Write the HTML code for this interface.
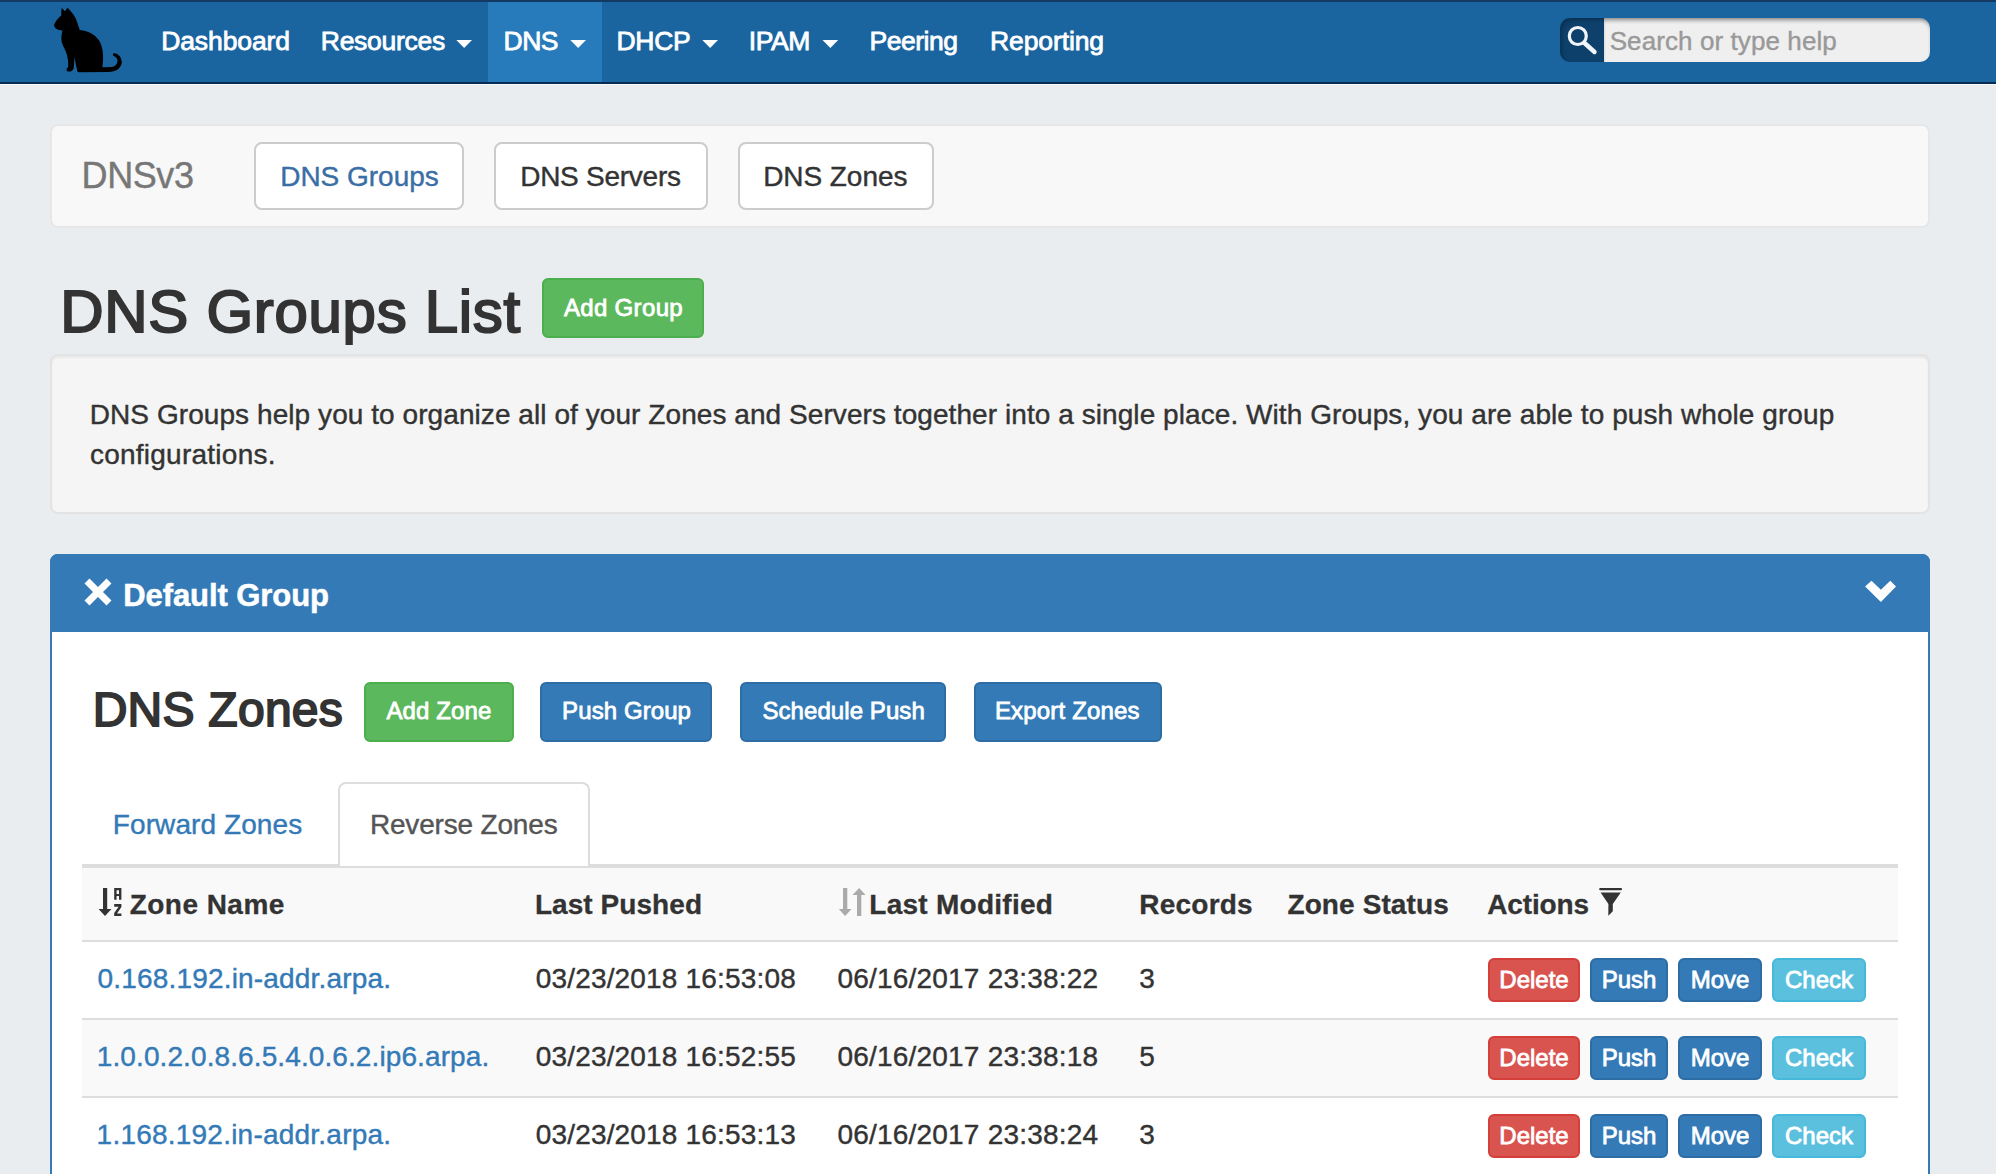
<!DOCTYPE html>
<html><head><meta charset="utf-8"><title>DNS Groups</title>
<style>
html,body{margin:0;padding:0}
body{width:1996px;height:1174px;overflow:hidden;position:relative;background:#eaedf0;font-family:"Liberation Sans",sans-serif}
.t{position:absolute;white-space:nowrap;line-height:1;font-family:"Liberation Sans",sans-serif}
</style></head><body>
<div style="position:absolute;left:0px;top:0px;width:1996px;height:84px;box-sizing:border-box;background:#1a65a0;border-top:2px solid #143a63;border-bottom:2px solid #062c54"></div>
<div style="position:absolute;left:0px;top:84px;width:1996px;height:1px;box-sizing:border-box;background:#f7f8fa"></div>
<div style="position:absolute;left:488px;top:2px;width:114px;height:80px;box-sizing:border-box;background:#287bba"></div>
<div style="position:absolute;left:1560px;top:18px;width:44px;height:44px;box-sizing:border-box;background:#0d406b;border-radius:10px 0 0 10px;box-shadow:inset 2px 2px 4px rgba(0,0,0,.25)"></div>
<div style="position:absolute;left:1604px;top:18px;width:326px;height:44px;box-sizing:border-box;background:#efefef;border-radius:0 10px 10px 0;box-shadow:inset 0 4px 4px -2px rgba(0,0,0,.45)"></div>
<div style="position:absolute;left:50px;top:124px;width:1880px;height:104px;box-sizing:border-box;background:#f8f8f8;border:2px solid #e7e7e7;border-radius:8px"></div>
<div style="position:absolute;left:254px;top:142px;width:210px;height:68px;box-sizing:border-box;background:#fff;border:2px solid #ccc;border-radius:8px"></div>
<div style="position:absolute;left:494px;top:142px;width:214px;height:68px;box-sizing:border-box;background:#fff;border:2px solid #ccc;border-radius:8px"></div>
<div style="position:absolute;left:738px;top:142px;width:196px;height:68px;box-sizing:border-box;background:#fff;border:2px solid #ccc;border-radius:8px"></div>
<div style="position:absolute;left:542px;top:278px;width:162px;height:60px;box-sizing:border-box;background:#5cb85c;border:2px solid #4cae4c;border-radius:6px"></div>
<div style="position:absolute;left:50px;top:354px;width:1880px;height:160px;box-sizing:border-box;background:#f5f5f5;border:2px solid #e3e3e3;border-radius:8px;box-shadow:inset 0 2px 2px rgba(0,0,0,.05)"></div>
<div style="position:absolute;left:50px;top:554px;width:1880px;height:746px;box-sizing:border-box;background:#fff;border:2px solid #337ab7;border-radius:8px"></div>
<div style="position:absolute;left:50px;top:554px;width:1880px;height:78px;box-sizing:border-box;background:#337ab7;border-radius:8px 8px 0 0"></div>
<div style="position:absolute;left:364px;top:682px;width:150px;height:60px;box-sizing:border-box;background:#5cb85c;border:2px solid #4cae4c;border-radius:6px"></div>
<div style="position:absolute;left:540px;top:682px;width:172px;height:60px;box-sizing:border-box;background:#337ab7;border:2px solid #2e6da4;border-radius:6px"></div>
<div style="position:absolute;left:740px;top:682px;width:206px;height:60px;box-sizing:border-box;background:#337ab7;border:2px solid #2e6da4;border-radius:6px"></div>
<div style="position:absolute;left:974px;top:682px;width:188px;height:60px;box-sizing:border-box;background:#337ab7;border:2px solid #2e6da4;border-radius:6px"></div>
<div style="position:absolute;left:82px;top:864px;width:1816px;height:2px;box-sizing:border-box;background:#ddd"></div>
<div style="position:absolute;left:338px;top:782px;width:252px;height:84px;box-sizing:border-box;background:#fff;border:2px solid #ddd;border-bottom:none;border-radius:8px 8px 0 0"></div>
<div style="position:absolute;left:82px;top:866px;width:1816px;height:2px;box-sizing:border-box;background:#ddd"></div>
<div style="position:absolute;left:82px;top:868px;width:1816px;height:72px;box-sizing:border-box;background:#f9f9f9"></div>
<div style="position:absolute;left:82px;top:940px;width:1816px;height:2px;box-sizing:border-box;background:#ddd"></div>
<div style="position:absolute;left:82px;top:1018px;width:1816px;height:2px;box-sizing:border-box;background:#ddd"></div>
<div style="position:absolute;left:82px;top:1020px;width:1816px;height:76px;box-sizing:border-box;background:#f9f9f9"></div>
<div style="position:absolute;left:82px;top:1096px;width:1816px;height:2px;box-sizing:border-box;background:#ddd"></div>
<div style="position:absolute;left:1488px;top:958px;width:92px;height:44px;box-sizing:border-box;background:#d9534f;border:2px solid #d43f3a;border-radius:6px"></div>
<div style="position:absolute;left:1590px;top:958px;width:78px;height:44px;box-sizing:border-box;background:#337ab7;border:2px solid #2e6da4;border-radius:6px"></div>
<div style="position:absolute;left:1678px;top:958px;width:84px;height:44px;box-sizing:border-box;background:#337ab7;border:2px solid #2e6da4;border-radius:6px"></div>
<div style="position:absolute;left:1772px;top:958px;width:94px;height:44px;box-sizing:border-box;background:#5bc0de;border:2px solid #46b8da;border-radius:6px"></div>
<div style="position:absolute;left:1488px;top:1036px;width:92px;height:44px;box-sizing:border-box;background:#d9534f;border:2px solid #d43f3a;border-radius:6px"></div>
<div style="position:absolute;left:1590px;top:1036px;width:78px;height:44px;box-sizing:border-box;background:#337ab7;border:2px solid #2e6da4;border-radius:6px"></div>
<div style="position:absolute;left:1678px;top:1036px;width:84px;height:44px;box-sizing:border-box;background:#337ab7;border:2px solid #2e6da4;border-radius:6px"></div>
<div style="position:absolute;left:1772px;top:1036px;width:94px;height:44px;box-sizing:border-box;background:#5bc0de;border:2px solid #46b8da;border-radius:6px"></div>
<div style="position:absolute;left:1488px;top:1114px;width:92px;height:44px;box-sizing:border-box;background:#d9534f;border:2px solid #d43f3a;border-radius:6px"></div>
<div style="position:absolute;left:1590px;top:1114px;width:78px;height:44px;box-sizing:border-box;background:#337ab7;border:2px solid #2e6da4;border-radius:6px"></div>
<div style="position:absolute;left:1678px;top:1114px;width:84px;height:44px;box-sizing:border-box;background:#337ab7;border:2px solid #2e6da4;border-radius:6px"></div>
<div style="position:absolute;left:1772px;top:1114px;width:94px;height:44px;box-sizing:border-box;background:#5bc0de;border:2px solid #46b8da;border-radius:6px"></div>

<svg style="position:absolute;left:0;top:0" width="1996" height="1174" viewBox="0 0 1996 1174">
 <!-- cat -->
 <g transform="translate(40,0) scale(0.085179)">
<path fill="#000" d="M255,90 L292,132 L322,92 C350,120 380,150 405,190 C430,230 445,290 468,352 C560,362 640,400 690,470 C730,530 745,620 740,700 C738,740 735,770 733,790 L840,788 C880,785 905,760 910,720 C912,690 895,670 870,660 C850,650 850,625 875,625 C925,630 960,680 960,730 C955,800 890,845 800,845 L460,848 C440,845 430,830 435,815 C420,770 415,720 408,670 C400,720 400,770 395,800 C385,835 355,845 325,838 C305,830 305,805 330,790 C335,760 330,700 315,640 C295,570 260,530 255,490 C245,440 255,390 265,362 C230,355 205,350 185,335 C160,315 160,290 180,262 C200,230 225,200 250,182 C248,150 250,120 255,90 Z"/>
 </g>
 <!-- carets -->
 <g fill="#fff">
  <path d="M456.3,40 L472,40 L464.15,48 Z"/>
  <path d="M570.3,40 L586,40 L578.15,48 Z"/>
  <path d="M702.3,40 L718,40 L710.15,48 Z"/>
  <path d="M822.5,40 L838.2,40 L830.35,48 Z"/>
 </g>
 <!-- magnifier -->
 <g stroke="#f2f5f8" fill="none" stroke-linecap="round">
  <circle cx="1577.8" cy="36" r="8.5" stroke-width="3.2"/>
  <path d="M1584.5,43 L1594.5,52" stroke-width="4.4"/>
 </g>
 <!-- X icon -->
 <g stroke="#fff" stroke-width="7">
  <path d="M87,581 L109,603 M109,581 L87,603"/>
 </g>
 <!-- chevron -->
 <path fill="#fff" d="M1865.1,586.5 L1871.5,580.8 L1880.9,589.7 L1890.3,580.8 L1896,586.5 L1880.9,602 Z"/>
 <!-- sort az icon -->
 <g fill="#333">
  <rect x="103" y="888" width="4.2" height="22"/>
  <path d="M98.6,909 L111.5,909 L105,916 Z"/>
  <path d="M114.2,888 h7.2 v11.8 h-2.4 v-3.9 h-2.4 v3.9 h-2.4 Z M116.6,890.2 v3.7 h2.4 v-3.7 Z" fill-rule="evenodd"/>
  <path d="M114.2,904.1 h7.2 v3 l-4.4,6.3 h4.4 v2.5 h-7.2 v-2.8 l4.4,-6.4 h-4.4 Z"/>
 </g>
 <!-- sort both icon gray -->
 <g fill="#aaa">
  <rect x="843" y="888" width="4.3" height="21.5"/>
  <path d="M838.8,909 L851.5,909 L845.15,916 Z"/>
  <rect x="857" y="894.5" width="4.3" height="21.5"/>
  <path d="M852.6,895 L865.6,895 L859.15,888 Z"/>
 </g>
 <!-- funnel -->
 <g fill="#333">
  <rect x="1599.2" y="888" width="22.8" height="2.2" rx="1"/>
  <path d="M1600.6,892.6 L1620.8,892.6 L1612.8,903.9 L1612.8,911.3 L1608.3,915.8 L1608.4,903.9 Z"/>
 </g>
</svg>

<div class="t" style="left:161.20px;top:28.0px;font-size:26.5px;color:#fff;letter-spacing:-0.100px;-webkit-text-stroke:0.80px #fff;">Dashboard</div>
<div class="t" style="left:320.80px;top:28.0px;font-size:26.5px;color:#fff;letter-spacing:-0.275px;-webkit-text-stroke:0.80px #fff;">Resources</div>
<div class="t" style="left:503.40px;top:28.0px;font-size:26.5px;color:#fff;letter-spacing:-0.400px;-webkit-text-stroke:0.80px #fff;">DNS</div>
<div class="t" style="left:616.60px;top:28.0px;font-size:26.5px;color:#fff;letter-spacing:-0.367px;-webkit-text-stroke:0.80px #fff;">DHCP</div>
<div class="t" style="left:748.80px;top:28.0px;font-size:26.5px;color:#fff;letter-spacing:-0.400px;-webkit-text-stroke:0.80px #fff;">IPAM</div>
<div class="t" style="left:869.50px;top:28.0px;font-size:26.5px;color:#fff;letter-spacing:-0.483px;-webkit-text-stroke:0.80px #fff;">Peering</div>
<div class="t" style="left:990.00px;top:28.0px;font-size:26.5px;color:#fff;letter-spacing:-0.100px;-webkit-text-stroke:0.80px #fff;">Reporting</div>
<div class="t" style="left:1609.70px;top:28.0px;font-size:26px;color:#999;letter-spacing:0.089px;-webkit-text-stroke:0.40px #999;">Search or type help</div>
<div class="t" style="left:81.60px;top:158.0px;font-size:36px;color:#777;letter-spacing:-0.425px;-webkit-text-stroke:0.40px #777;">DNSv3</div>
<div class="t" style="left:280.20px;top:162.8px;font-size:28px;color:#3a6ea5;letter-spacing:-0.011px;-webkit-text-stroke:0.40px #3a6ea5;">DNS Groups</div>
<div class="t" style="left:520.20px;top:162.8px;font-size:28px;color:#333;letter-spacing:-0.260px;-webkit-text-stroke:0.40px #333;">DNS Servers</div>
<div class="t" style="left:763.20px;top:162.8px;font-size:28px;color:#333;letter-spacing:-0.063px;-webkit-text-stroke:0.40px #333;">DNS Zones</div>
<div class="t" style="left:60.30px;top:282.0px;font-size:60px;color:#333;letter-spacing:0.693px;-webkit-text-stroke:2.00px #333;">DNS Groups List</div>
<div class="t" style="left:563.90px;top:296.0px;font-size:24px;color:#fff;letter-spacing:0.338px;-webkit-text-stroke:0.80px #fff;">Add Group</div>
<div class="t" style="left:89.80px;top:401.0px;font-size:28px;color:#333;letter-spacing:0.066px;-webkit-text-stroke:0.40px #333;">DNS Groups help you to organize all of your Zones and Servers together into a single place. With Groups, you are able to push whole group</div>
<div class="t" style="left:89.90px;top:441.0px;font-size:28px;color:#333;letter-spacing:0.250px;-webkit-text-stroke:0.40px #333;">configurations.</div>
<div class="t" style="left:123.15px;top:580.0px;font-size:31px;color:#fff;font-weight:bold;letter-spacing:-0.067px;-webkit-text-stroke:0.50px #fff;">Default Group</div>
<div class="t" style="left:92.65px;top:686.0px;font-size:48px;color:#333;letter-spacing:0.262px;-webkit-text-stroke:1.90px #333;">DNS Zones</div>
<div class="t" style="left:386.40px;top:699.0px;font-size:24px;color:#fff;letter-spacing:0.129px;-webkit-text-stroke:0.80px #fff;">Add Zone</div>
<div class="t" style="left:562.10px;top:699.0px;font-size:24px;color:#fff;letter-spacing:0.089px;-webkit-text-stroke:0.80px #fff;">Push Group</div>
<div class="t" style="left:762.40px;top:699.0px;font-size:24px;color:#fff;letter-spacing:0.075px;-webkit-text-stroke:0.80px #fff;">Schedule Push</div>
<div class="t" style="left:994.90px;top:699.0px;font-size:24px;color:#fff;letter-spacing:0.173px;-webkit-text-stroke:0.80px #fff;">Export Zones</div>
<div class="t" style="left:112.80px;top:811.4px;font-size:28px;color:#337ab7;letter-spacing:0.092px;-webkit-text-stroke:0.40px #337ab7;">Forward Zones</div>
<div class="t" style="left:369.90px;top:811.4px;font-size:28px;color:#555;letter-spacing:-0.175px;-webkit-text-stroke:0.40px #555;">Reverse Zones</div>
<div class="t" style="left:129.65px;top:891.0px;font-size:28px;color:#333;font-weight:bold;letter-spacing:0.475px;-webkit-text-stroke:0.30px #333;">Zone Name</div>
<div class="t" style="left:534.95px;top:891.0px;font-size:28px;color:#333;font-weight:bold;letter-spacing:0.060px;-webkit-text-stroke:0.30px #333;">Last Pushed</div>
<div class="t" style="left:869.35px;top:891.0px;font-size:28px;color:#333;font-weight:bold;letter-spacing:0.258px;-webkit-text-stroke:0.30px #333;">Last Modified</div>
<div class="t" style="left:1139.25px;top:891.0px;font-size:28px;color:#333;font-weight:bold;letter-spacing:0.233px;-webkit-text-stroke:0.30px #333;">Records</div>
<div class="t" style="left:1287.45px;top:891.0px;font-size:28px;color:#333;font-weight:bold;letter-spacing:0.110px;-webkit-text-stroke:0.30px #333;">Zone Status</div>
<div class="t" style="left:1487.15px;top:891.0px;font-size:28px;color:#333;font-weight:bold;letter-spacing:-0.117px;-webkit-text-stroke:0.30px #333;">Actions</div>
<div class="t" style="left:97.60px;top:965.0px;font-size:28px;color:#337ab7;letter-spacing:0.177px;-webkit-text-stroke:0.40px #337ab7;">0.168.192.in-addr.arpa.</div>
<div class="t" style="left:535.70px;top:965.0px;font-size:28px;color:#333;letter-spacing:0.178px;-webkit-text-stroke:0.40px #333;">03/23/2018 16:53:08</div>
<div class="t" style="left:837.40px;top:965.0px;font-size:28px;color:#333;letter-spacing:0.211px;-webkit-text-stroke:0.40px #333;">06/16/2017 23:38:22</div>
<div class="t" style="left:1139.20px;top:965.0px;font-size:28px;color:#333;-webkit-text-stroke:0.40px #333;">3</div>
<div class="t" style="left:96.80px;top:1043.0px;font-size:28px;color:#337ab7;letter-spacing:0.100px;-webkit-text-stroke:0.40px #337ab7;">1.0.0.2.0.8.6.5.4.0.6.2.ip6.arpa.</div>
<div class="t" style="left:535.70px;top:1043.0px;font-size:28px;color:#333;letter-spacing:0.178px;-webkit-text-stroke:0.40px #333;">03/23/2018 16:52:55</div>
<div class="t" style="left:837.40px;top:1043.0px;font-size:28px;color:#333;letter-spacing:0.211px;-webkit-text-stroke:0.40px #333;">06/16/2017 23:38:18</div>
<div class="t" style="left:1139.20px;top:1043.0px;font-size:28px;color:#333;-webkit-text-stroke:0.40px #333;">5</div>
<div class="t" style="left:96.60px;top:1121.0px;font-size:28px;color:#337ab7;letter-spacing:0.223px;-webkit-text-stroke:0.40px #337ab7;">1.168.192.in-addr.arpa.</div>
<div class="t" style="left:535.70px;top:1121.0px;font-size:28px;color:#333;letter-spacing:0.178px;-webkit-text-stroke:0.40px #333;">03/23/2018 16:53:13</div>
<div class="t" style="left:837.40px;top:1121.0px;font-size:28px;color:#333;letter-spacing:0.211px;-webkit-text-stroke:0.40px #333;">06/16/2017 23:38:24</div>
<div class="t" style="left:1139.20px;top:1121.0px;font-size:28px;color:#333;-webkit-text-stroke:0.40px #333;">3</div>
<div class="t" style="left:1499.31px;top:968.0px;font-size:24px;color:#fff;-webkit-text-stroke:0.80px #fff;">Delete</div>
<div class="t" style="left:1601.65px;top:968.0px;font-size:24px;color:#fff;-webkit-text-stroke:0.80px #fff;">Push</div>
<div class="t" style="left:1690.66px;top:968.0px;font-size:24px;color:#fff;-webkit-text-stroke:0.80px #fff;">Move</div>
<div class="t" style="left:1784.98px;top:968.0px;font-size:24px;color:#fff;-webkit-text-stroke:0.80px #fff;">Check</div>
<div class="t" style="left:1499.31px;top:1046.0px;font-size:24px;color:#fff;-webkit-text-stroke:0.80px #fff;">Delete</div>
<div class="t" style="left:1601.65px;top:1046.0px;font-size:24px;color:#fff;-webkit-text-stroke:0.80px #fff;">Push</div>
<div class="t" style="left:1690.66px;top:1046.0px;font-size:24px;color:#fff;-webkit-text-stroke:0.80px #fff;">Move</div>
<div class="t" style="left:1784.98px;top:1046.0px;font-size:24px;color:#fff;-webkit-text-stroke:0.80px #fff;">Check</div>
<div class="t" style="left:1499.31px;top:1124.0px;font-size:24px;color:#fff;-webkit-text-stroke:0.80px #fff;">Delete</div>
<div class="t" style="left:1601.65px;top:1124.0px;font-size:24px;color:#fff;-webkit-text-stroke:0.80px #fff;">Push</div>
<div class="t" style="left:1690.66px;top:1124.0px;font-size:24px;color:#fff;-webkit-text-stroke:0.80px #fff;">Move</div>
<div class="t" style="left:1784.98px;top:1124.0px;font-size:24px;color:#fff;-webkit-text-stroke:0.80px #fff;">Check</div>
</body></html>
